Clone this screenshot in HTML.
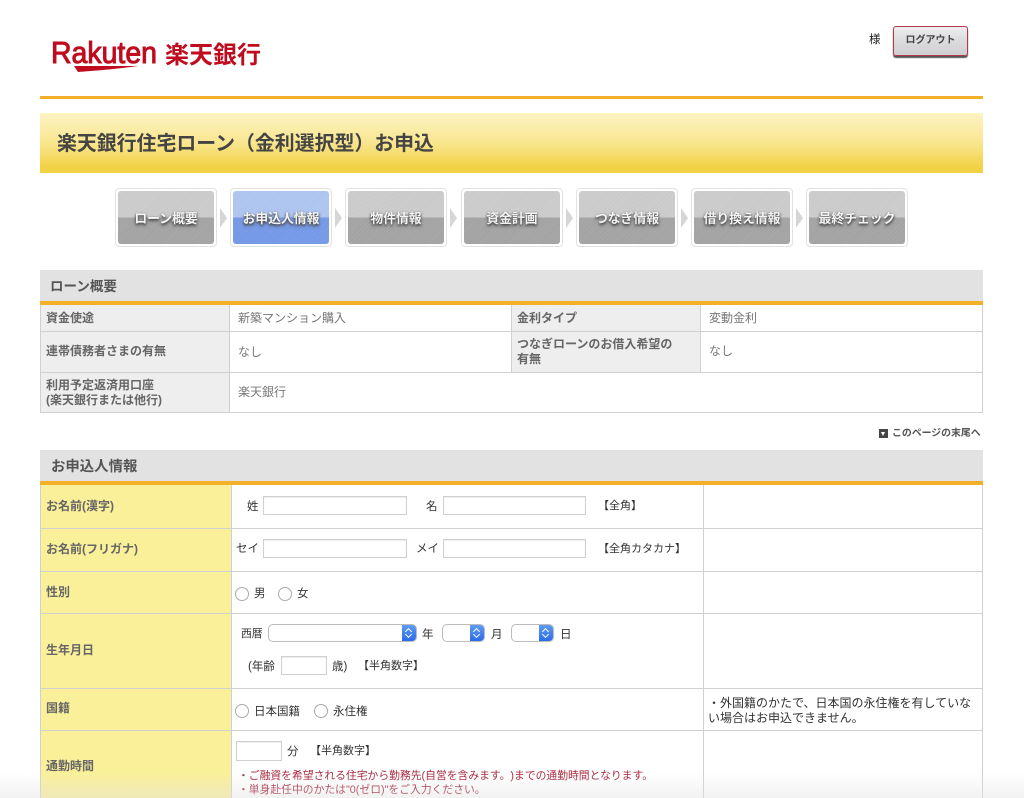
<!DOCTYPE html>
<html lang="ja"><head><meta charset="utf-8"><title>楽天銀行住宅ローン お申込</title>
<style>
html,body{margin:0;padding:0;background:#fff}
body{width:1024px;height:798px;position:relative;overflow:hidden;font-family:"Liberation Sans","Noto Sans CJK JP",sans-serif;font-size:12px;color:#333;text-spacing-trim:space-all}
#w{position:absolute;left:0;top:0;width:1024px;height:798px;filter:blur(.35px)}
.a{position:absolute}
.t{position:absolute;white-space:nowrap;line-height:16px;margin-top:-8px}
.l{font-weight:700;color:#666;font-size:12px}
.v{color:#777;font-size:12px}
.f{color:#333;font-size:11.5px;margin-top:-7px}
.h{background:#e2e2e2;left:40px;width:943px;height:31px}
.o{background:#f4b028;left:40px;width:943px;height:4px}
.g{background:#d0d0d0}
.y{background:#faf09a}
.s{position:absolute;top:188px;width:102px;height:59px;box-sizing:border-box;border:1px solid #e2e2e2;border-radius:4px;background:#fff;padding:2px}
.s div{height:53px;border-radius:3px;background:repeating-linear-gradient(135deg,rgba(255,255,255,.06) 0 1px,rgba(0,0,0,.03) 1px 2px),linear-gradient(#cdcdcd 0,#cdcdcd 50%,#a5a5a5 50%,#a5a5a5 100%);color:#f4f4f4;font-size:12.8px;font-weight:700;line-height:56px;text-align:center;text-shadow:0 1px 2px #444,0 2px 3px #555;white-space:nowrap}
.s.b div{background:repeating-linear-gradient(135deg,rgba(255,255,255,.06) 0 1px,rgba(0,0,0,.03) 1px 2px),linear-gradient(#afc7f3 0,#afc7f3 50%,#759aea 50%,#759aea 100%)}
.r{position:absolute;width:0;height:0;top:208px;border-left:7px solid #d6d6d6;border-top:10px solid transparent;border-bottom:10px solid transparent}
.i{position:absolute;box-sizing:border-box;border:1px solid #d0d0d0;background:#fff;box-shadow:inset 0 1px 1px #eee}
.c{position:absolute;box-sizing:border-box;width:14px;height:14px;border:1px solid #aaa;border-radius:50%;background:#fff}
.e{position:absolute;box-sizing:border-box;top:624px;height:18px;border:1px solid #bbb;border-radius:5px;background:#fff;overflow:hidden}
.e i{position:absolute;right:0;top:0;bottom:0;width:14px;background:linear-gradient(#5f9cf3,#2c6bea)}
.e i:before,.e i:after{content:"";position:absolute;left:4px;width:4px;height:4px;border-left:1px solid #fff;border-top:1px solid #fff}
.e i:before{top:4px;transform:rotate(45deg)}
.e i:after{top:7px;transform:rotate(225deg)}
</style></head><body><div id="w">

<svg class="a" style="left:48px;top:34px" width="220" height="42" viewBox="0 0 220 42">
<text x="3" y="29" font-family="Liberation Sans" font-size="31" fill="#bf0d1f" stroke="#bf0d1f" stroke-width="1" textLength="106" lengthAdjust="spacingAndGlyphs">Rakuten</text>
<path d="M26 32 L90 32 C70 35 45 37 30 38 Z" fill="#bf0d1f"/>
<text x="117" y="29" font-family="Noto Sans CJK JP" font-size="24" font-weight="700" fill="#bf0d1f" textLength="96" lengthAdjust="spacingAndGlyphs">楽天銀行</text>
</svg>

<span class="t" style="left:869px;top:40px;font-size:11.5px;color:#222">様</span>
<div class="a" style="left:893px;top:26px;width:75px;height:30px;box-sizing:border-box;border:1.5px solid #b5374e;border-radius:3px;background:linear-gradient(#eeeef0,#dcdcde 45%,#cfcfd2);box-shadow:0 2px 1px #555;text-align:center;font-size:10px;font-weight:700;line-height:28px;color:#444">ログアウト</div>

<div class="a" style="left:40px;top:96px;width:943px;height:3px;background:#f4b028"></div>
<div class="a" style="left:40px;top:113px;width:943px;height:60px;background:linear-gradient(#fdf3c4,#f9e68f 50%,#f2d245 90%,#f2d142)"></div>
<span class="t" style="left:57px;top:144px;font-size:19.9px;font-weight:700;color:#444;line-height:24px;margin-top:-12px">楽天銀行住宅ローン（金利選択型）お申込</span>

<div class="s" style="left:115px"><div>ローン概要</div></div><div class="r" style="left:220px"></div>
<div class="s b" style="left:230px"><div>お申込人情報</div></div><div class="r" style="left:335px"></div>
<div class="s" style="left:345px"><div>物件情報</div></div><div class="r" style="left:450px"></div>
<div class="s" style="left:461px"><div>資金計画</div></div><div class="r" style="left:566px"></div>
<div class="s" style="left:576px"><div>つなぎ情報</div></div><div class="r" style="left:681px"></div>
<div class="s" style="left:691px"><div>借り換え情報</div></div><div class="r" style="left:796px"></div>
<div class="s" style="left:806px"><div>最終チェック</div></div>

<!-- Loan summary -->
<div class="a h" style="top:270px"></div><div class="a o" style="top:301px"></div>
<span class="t" style="left:50px;top:287px;font-size:13.5px;font-weight:700;color:#555">ローン概要</span>
<div class="a" style="left:40px;top:305px;width:189px;height:108px;background:#eee"></div>
<div class="a" style="left:511px;top:305px;width:189px;height:67px;background:#eee"></div>
<div class="a g" style="left:40px;top:331px;width:943px;height:1px"></div>
<div class="a g" style="left:40px;top:372px;width:943px;height:1px"></div>
<div class="a g" style="left:40px;top:412px;width:943px;height:1px"></div>
<div class="a g" style="left:40px;top:305px;width:1px;height:108px"></div>
<div class="a g" style="left:229px;top:305px;width:1px;height:108px"></div>
<div class="a g" style="left:511px;top:305px;width:1px;height:67px"></div>
<div class="a g" style="left:700px;top:305px;width:1px;height:67px"></div>
<div class="a g" style="left:982px;top:305px;width:1px;height:108px"></div>
<span class="t l" style="left:46px;top:318px">資金使途</span>
<span class="t l" style="left:46px;top:351px">連帯債務者さまの有無</span>
<span class="t l" style="left:46px;top:385px">利用予定返済用口座</span>
<span class="t l" style="left:46px;top:400px">(楽天銀行または他行)</span>
<span class="t v" style="left:238px;top:318px">新築マンション購入</span>
<span class="t v" style="left:238px;top:352px">なし</span>
<span class="t v" style="left:238px;top:392px">楽天銀行</span>
<span class="t l" style="left:517px;top:318px">金利タイプ</span>
<span class="t l" style="left:517px;top:344px">つなぎローンのお借入希望の</span>
<span class="t l" style="left:517px;top:359px">有無</span>
<span class="t v" style="left:709px;top:318px">変動金利</span>
<span class="t v" style="left:709px;top:351px">なし</span>

<div class="a" style="left:879px;top:429px;width:9px;height:9px;background:#444"></div>
<div class="a" style="left:881px;top:432px;width:0;height:0;border-top:4px solid #fff;border-left:2.5px solid transparent;border-right:2.5px solid transparent"></div>
<span class="t" style="left:892px;top:434px;font-size:9.9px;font-weight:700;color:#555">このページの末尾へ</span>

<!-- Applicant -->
<div class="a h" style="top:450px"></div><div class="a o" style="top:481px"></div>
<span class="t" style="left:51px;top:467px;font-size:14.4px;font-weight:700;color:#555">お申込人情報</span>
<div class="a y" style="left:41px;top:485px;width:190px;height:313px"></div>
<div class="a g" style="left:40px;top:485px;width:1px;height:313px"></div>
<div class="a g" style="left:231px;top:485px;width:1px;height:313px"></div>
<div class="a g" style="left:703px;top:485px;width:1px;height:313px"></div>
<div class="a g" style="left:982px;top:485px;width:1px;height:313px"></div>
<div class="a g" style="left:40px;top:528px;width:943px;height:1px"></div>
<div class="a g" style="left:40px;top:571px;width:943px;height:1px"></div>
<div class="a g" style="left:40px;top:613px;width:943px;height:1px"></div>
<div class="a g" style="left:40px;top:688px;width:943px;height:1px"></div>
<div class="a g" style="left:40px;top:730px;width:943px;height:1px"></div>

<span class="t l" style="left:46px;top:506px">お名前(漢字)</span>
<span class="t l" style="left:46px;top:549px">お名前(フリガナ)</span>
<span class="t l" style="left:46px;top:592px">性別</span>
<span class="t l" style="left:46px;top:650px">生年月日</span>
<span class="t l" style="left:46px;top:708px">国籍</span>
<span class="t l" style="left:46px;top:766px">通勤時間</span>

<span class="t f" style="left:247px;top:506px">姓</span>
<div class="i" style="left:263px;top:496px;width:144px;height:19px"></div>
<span class="t f" style="left:426px;top:506px">名</span>
<div class="i" style="left:443px;top:496px;width:143px;height:19px"></div>
<span class="t f" style="left:598px;top:505px;font-size:11px">【全角】</span>

<span class="t f" style="left:236px;top:548px">セイ</span>
<div class="i" style="left:263px;top:539px;width:144px;height:19px"></div>
<span class="t f" style="left:416px;top:548px">メイ</span>
<div class="i" style="left:443px;top:539px;width:143px;height:19px"></div>
<span class="t f" style="left:598px;top:548px;font-size:11px">【全角カタカナ】</span>

<div class="c" style="left:235px;top:587px"></div><span class="t f" style="left:254px;top:593px">男</span>
<div class="c" style="left:278px;top:587px"></div><span class="t f" style="left:297px;top:593px">女</span>

<span class="t f" style="left:241px;top:633px;font-size:10.8px">西暦</span>
<div class="e" style="left:268px;width:149px"><i></i></div>
<span class="t f" style="left:422px;top:634px">年</span>
<div class="e" style="left:442px;width:43px"><i></i></div>
<span class="t f" style="left:491px;top:634px">月</span>
<div class="e" style="left:511px;width:43px"><i></i></div>
<span class="t f" style="left:560px;top:634px">日</span>

<span class="t f" style="left:248px;top:666px">(年齢</span>
<div class="i" style="left:281px;top:656px;width:46px;height:19px"></div>
<span class="t f" style="left:332px;top:666px">歳)</span>
<span class="t f" style="left:358px;top:665px;font-size:11px">【半角数字】</span>

<div class="c" style="left:235px;top:704px"></div><span class="t f" style="left:254px;top:711px">日本国籍</span>
<div class="c" style="left:314px;top:704px"></div><span class="t f" style="left:333px;top:711px">永住権</span>
<span class="t f" style="left:708px;top:702px;font-size:12px">・外国籍のかたで、日本国の永住権を有していな</span>
<span class="t f" style="left:708px;top:717px;font-size:12px">い場合はお申込できません。</span>

<div class="i" style="left:236px;top:741px;width:46px;height:20px"></div>
<span class="t f" style="left:287px;top:751px">分</span>
<span class="t f" style="left:310px;top:750px;font-size:11px">【半角数字】</span>
<span class="t" style="left:238px;top:776px;font-size:10.8px;color:#a5243c">・ご融資を希望される住宅から勤務先(自営を含みます。)までの通勤時間となります。</span>
<span class="t" style="left:238px;top:790px;font-size:10.8px;color:#a5243c">・単身赴任中のかたは"0(ゼロ)"をご入力ください。</span>

<div class="a" style="left:0;top:772px;width:1024px;height:26px;background:linear-gradient(rgba(225,225,225,0),rgba(225,225,225,.45))"></div>
</div></body></html>
